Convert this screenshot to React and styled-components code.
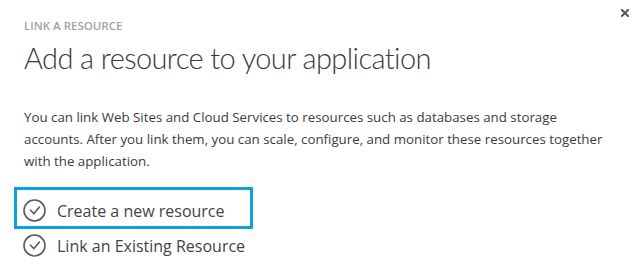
import React from "react";
import styled, { createGlobalStyle } from "styled-components";

const Global = createGlobalStyle`
  html, body { margin: 0; padding: 0; background: #ffffff; }
  body { font-family: "Open Sans", "Liberation Sans", sans-serif; color: #444; }
  * { box-sizing: border-box; }
`;

const Dialog = styled.div`
  position: relative;
  width: 634px;
  height: 270px;
  padding: 18px 0 0 24px;
  background: #fff;
  overflow: hidden;
`;

const Close = styled.button`
  position: absolute;
  top: 9px;
  right: 5px;
  width: 8px;
  height: 8px;
  padding: 0;
  border: 0;
  background: transparent;
  display: flex;
  cursor: pointer;
`;

const Label = styled.div`
  font-size: 11.5px;
  line-height: 15px;
  font-weight: 600;
  color: #a2a2a2;
  text-transform: uppercase;
`;

const Title = styled.h1`
  margin: 7px 0 0;
  font-family: "Lato", "Open Sans", sans-serif;
  font-size: 29px;
  line-height: 36px;
  font-weight: 300;
  letter-spacing: -0.6px;
  color: #3a3a3a;
  white-space: nowrap;
`;

const Text = styled.p`
  margin: 30px 0 0;
  font-size: 13.3px;
  line-height: 22px;
  color: #3c3c3c;
  white-space: nowrap;
`;

const Options = styled.div`
  margin: 15px 0 0 -10px;
  display: flex;
  flex-direction: column;
`;

const Option = styled.div`
  width: 239px;
  height: ${(p) => (p.$selected ? "42px" : "35px")};
  border: 3px solid ${(p) => (p.$selected ? "#0aa2e0" : "transparent")};
  padding: ${(p) => (p.$selected ? "5px 0 0 6px" : "0 0 2px 6px")};
  display: flex;
  align-items: center;
  gap: 11px;
  font-size: 16px;
  color: #444;
  cursor: pointer;
  white-space: nowrap;
`;

const CheckIcon = styled.svg`
  flex-shrink: 0;
  display: block;
`;

const Check = () => (
  <CheckIcon width="23" height="23" viewBox="0 0 23 23" fill="none">
    <circle cx="11.5" cy="11.5" r="10.5" stroke="#5a5a5a" strokeWidth="1.6" />
    <path d="M7.5 11.2 L11 14.6 L16.4 8" stroke="#5a5a5a" strokeWidth="1.6" strokeLinecap="round" strokeLinejoin="round" />
  </CheckIcon>
);

export default function App() {
  return (
    <>
      <Global />
      <Dialog>
        <Close aria-label="Close">
          <svg width="8" height="8" viewBox="0 0 8 8">
            <path d="M1 1 L7 7 M7 1 L1 7" stroke="#555" strokeWidth="2" strokeLinecap="square" />
          </svg>
        </Close>
        <Label>Link a resource</Label>
        <Title>Add a resource to your application</Title>
        <Text>
          You can link Web Sites and Cloud Services to resources such as databases and storage
          <br />
          accounts. After you link them, you can scale, configure, and monitor these resources together
          <br />
          with the application.
        </Text>
        <Options>
          <Option $selected>
            <Check />
            Create a new resource
          </Option>
          <Option>
            <Check />
            Link an Existing Resource
          </Option>
        </Options>
      </Dialog>
    </>
  );
}
